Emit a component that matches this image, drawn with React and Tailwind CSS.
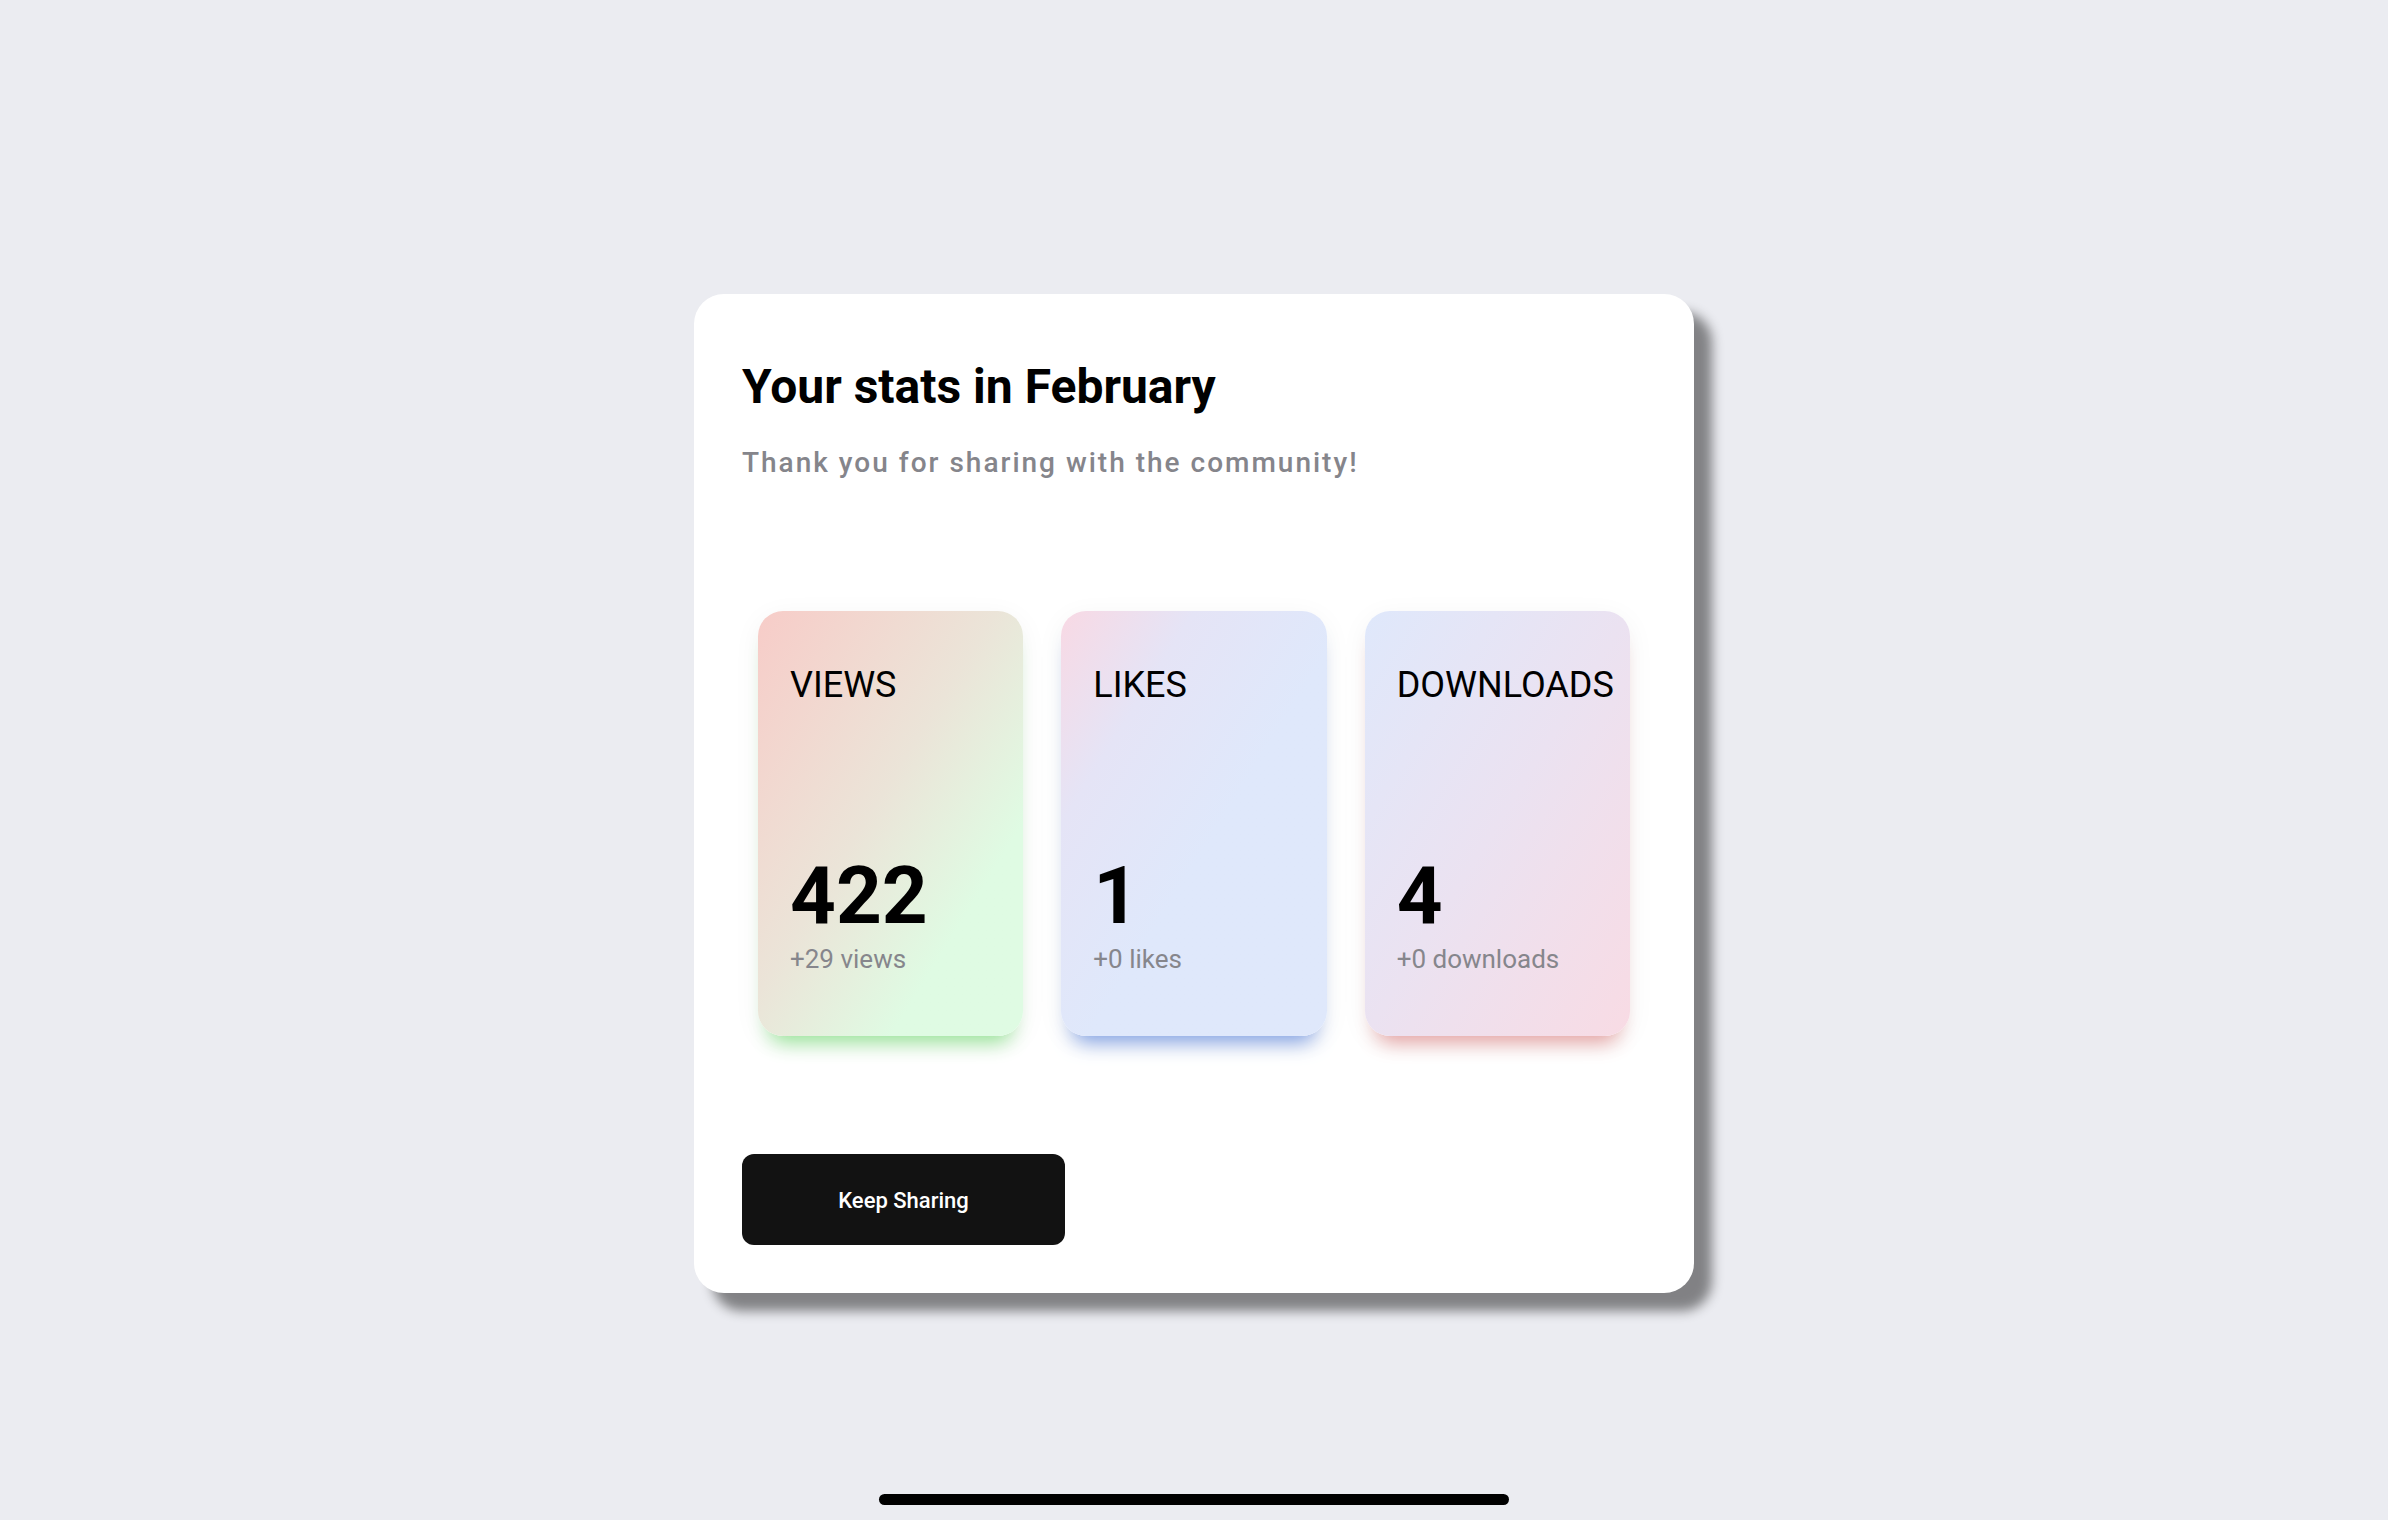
import React from "react";

const stats = [
  {
    label: "VIEWS",
    value: "422",
    delta: "+29 views",
    bg: "bg-linear-to-br from-[#f7ccc8] via-[#ebe4d8] via-45% to-[#dffbe3] to-75%",
    glow: "shadow-[0_18px_20px_-12px_#94e394,0_6px_28px_rgba(0,0,0,0.05)]",
  },
  {
    label: "LIKES",
    value: "1",
    delta: "+0 likes",
    bg: "bg-linear-to-br from-[#f8d9e4] via-[#e5e4f6] via-25% to-[#dfe8fb] to-55%",
    glow: "shadow-[0_18px_20px_-12px_#7f9fe3,0_6px_28px_rgba(0,0,0,0.05)]",
  },
  {
    label: "DOWNLOADS",
    value: "4",
    delta: "+0 downloads",
    bg: "bg-linear-to-br from-[#dfe8fb] via-[#ebe2f1] via-50% to-[#f8dbe4]",
    glow: "shadow-[0_18px_20px_-12px_#e49f9f,0_6px_28px_rgba(0,0,0,0.05)]",
  },
];

const StatCard = ({ stat }) => {
  return (
    <div
      className={`h-[425px] rounded-[25px] flex flex-col px-[32px] pt-[53px] pb-[61px] ${stat.bg} ${stat.glow}`}
    >
      <p className="text-[36px] leading-[42px] font-normal text-black">
        {stat.label}
      </p>
      <div className="mt-auto">
        <p className="text-[80px] leading-[80px] font-bold text-black">
          {stat.value}
        </p>
        <p className="mt-[7px] text-[26px] leading-[32px] text-[#86868c]">
          {stat.delta}
        </p>
      </div>
    </div>
  );
};

const App = () => {
  return (
    <div className="min-h-screen bg-[#ebecf1] flex flex-col items-center pt-[294px] font-['Roboto','Liberation_Sans',sans-serif]">
      <div className="w-[1000px] bg-white rounded-[30px] px-[48px] pt-[64px] pb-[48px] shadow-[18px_18px_12px_rgba(0,0,0,0.45)]">
        <h1 className="text-[48px] leading-[58px] font-bold text-black">
          Your stats in February
        </h1>
        <p className="mt-[30px] text-[28px] leading-[34px] font-medium tracking-[2px] text-[#85858b]">
          Thank you for sharing with the community!
        </p>

        <div className="mt-[131px] px-4 grid grid-cols-3 gap-[38px]">
          {stats.map((stat) => (
            <StatCard key={stat.label} stat={stat} />
          ))}
        </div>

        <button className="mt-[118px] w-[323px] h-[91px] pt-[2px] rounded-[12px] bg-[#121212] text-white text-[22px] font-medium">
          Keep Sharing
        </button>
      </div>

      <div className="mt-[201px] w-[630px] h-[11px] rounded-full bg-black" />
    </div>
  );
};

export default App;
